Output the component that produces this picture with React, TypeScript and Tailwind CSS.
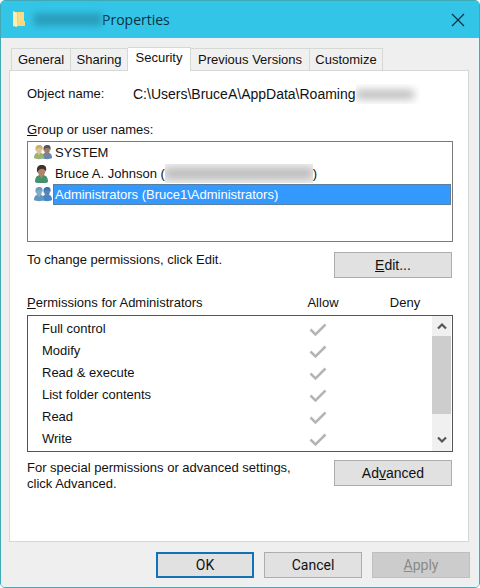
import React, { useState } from "react";
import clsx from "clsx";

const tabs = [
  { name: "General", width: "w-[60px]" },
  { name: "Sharing", width: "w-[57px]" },
  { name: "Security", width: "w-[63px]" },
  { name: "Previous Versions", width: "w-[119px]" },
  { name: "Customize", width: "w-[73px]" },
];

const permissions = [
  "Full control",
  "Modify",
  "Read & execute",
  "List folder contents",
  "Read",
  "Write",
];

const FolderIcon = () => (
  <svg width="13" height="17" viewBox="0 0 13 17" aria-hidden="true">
    <path d="M1 1h10v14H1z" fill="#f3cf66" />
    <path d="M5 1h6v9H5z" fill="#f9dd86" />
    <path d="M0 0l4 2v14l-4-1z" fill="#fdeeb4" />
    <path d="M4 10l8 0v5H4z" fill="#f6d982" />
  </svg>
);

interface PersonProps {
  x: number;
  y: number;
  hair: string;
  skin: string;
  shirt: string;
}

const Person: React.FC<PersonProps> = ({ x, y, hair, skin, shirt }) => (
  <g transform={`translate(${x} ${y})`}>
    <path d="M0 13c0-4 2-5.500 5-5.500s5 1.500 5 5.500c-2 1.500-8 1.500-10 0z" fill={shirt} />
    <path d="M3.200 7.200l1.800 3.300 1.800-3.300z" fill={skin} />
    <ellipse cx="5" cy="4.800" rx="2.900" ry="3.600" fill={skin} />
    <path d="M1.800 6C0.800 2 2.200 0 5.200 0s4 2 3.200 5C7.500 3.500 6.500 2.700 4.800 3 3.300 3 2.600 4 1.800 6z" fill={hair} />
  </g>
);

const SystemIcon = () => (
  <svg width="18" height="15" viewBox="0 0 18 15" aria-hidden="true">
    <Person x={8} y={0} hair="#55565c" skin="#a37b62" shirt="#6a86b0" />
    <Person x={0} y={0} hair="#c9b163" skin="#dcc394" shirt="#9ab373" />
  </svg>
);

const UserIcon = () => (
  <svg width="18" height="18" viewBox="0 0 18 18" aria-hidden="true">
    <g transform="translate(1 0) scale(1.300)">
      <Person x={0} y={0} hair="#3b332f" skin="#b08468" shirt="#45916b" />
    </g>
  </svg>
);

const AdminsIcon = () => (
  <svg width="18" height="15" viewBox="0 0 18 15" aria-hidden="true">
    <Person x={8} y={0} hair="#3f74b0" skin="#5785b5" shirt="#4486cb" />
    <Person x={0} y={0} hair="#6b9cbc" skin="#80acc6" shirt="#6197bd" />
  </svg>
);

const CheckMark = () => (
  <svg width="18" height="14" viewBox="0 0 18 14" role="img" aria-label="Allowed">
    <path d="M1.500 6.500L6.500 11.500L16.500 1.500" fill="none" stroke="#b5b5b5" strokeWidth="2.500" />
  </svg>
);

const Chevron = ({ down = false }: { down?: boolean }) => (
  <svg width="10" height="8" viewBox="0 0 10 8" aria-hidden="true">
    <path
      d={down ? "M1 1.500L5 5.500L9 1.500" : "M1 6.500L5 2.500L9 6.500"}
      fill="none"
      stroke="#555"
      strokeWidth="2.200"
    />
  </svg>
);

const users = [
  { id: "system", icon: <SystemIcon />, label: "SYSTEM" },
  {
    id: "bruce",
    icon: <UserIcon />,
    label: (
      <>
        Bruce A. Johnson (
        {/* hidden account address */}
        <span className="h-[19px] w-[148px] overflow-hidden bg-[#f0f0f0]" aria-hidden="true">
          <span className="mt-1 block h-[11px] bg-[#b8b8b8] blur-[4px]" />
        </span>
        )
      </>
    ),
  },
  { id: "admins", icon: <AdminsIcon />, label: "Administrators (Bruce1\\Administrators)" },
];

const buttonBase = "h-[26px] border text-[14px] leading-4";

const App: React.FC = () => {
  const [activeTab, setActiveTab] = useState("Security");
  const [selected, setSelected] = useState("admins");

  return (
    <div className="flex min-h-screen flex-col overflow-hidden rounded-[5px] border border-[#3fa9b5] bg-[#efefef] font-['Liberation_Sans',Arial,sans-serif] text-[13px] leading-4 text-[#111]">
      <header className="flex h-[37px] shrink-0 items-center bg-[#33c5e8] pr-[14px] pl-3 font-['Open_Sans','Noto_Sans',sans-serif] text-[14px] text-[#0b3143]">
        <FolderIcon />
        <span className="ml-2 h-[13px] w-[68px] bg-[#2a9fbc] blur-[3px]" aria-hidden="true" />
        <h1 className="flex-1">Properties</h1>
        <button type="button" aria-label="Close">
          <svg width="14" height="14" viewBox="0 0 14 14">
            <path d="M1 1l12 12M13 1L1 13" stroke="#0b3143" strokeWidth="1.200" />
          </svg>
        </button>
      </header>

      <main className="flex flex-1 flex-col border-x border-b border-[#dff8fc] pt-2 pr-2 pb-2 pl-[7px]">
        <div role="tablist" className="flex h-6 items-end pl-[2px]">
          {tabs.map((tab) => (
            <button
              key={tab.name}
              type="button"
              role="tab"
              aria-selected={tab.name === activeTab}
              onClick={() => setActiveTab(tab.name)}
              className={clsx(
                "border-t border-r border-[#d5d9d5] text-center whitespace-nowrap first:border-l",
                tab.width,
                tab.name === activeTab ? "z-10 -mb-px h-6 bg-white pb-1" : "h-[22px] bg-[#f0f0f0]"
              )}
            >
              {tab.name}
            </button>
          ))}
        </div>

        <section
          role="tabpanel"
          aria-label={activeTab}
          className="mr-px flex-1 border border-[#d5d9d5] bg-white pr-[15px] pl-[17px]"
        >
          <dl className="mt-[13px] flex h-5 items-center">
            <dt className="w-[106px]">Object name:</dt>
            <dd className="flex items-center text-[14px]">
              C:\Users\BruceA\AppData\Roaming
              <span className="h-5 w-16 overflow-hidden" aria-hidden="true">
                <span className="mt-[6px] mr-[6px] block h-[9px] bg-[#b8b8b8] blur-[4px]" />
              </span>
            </dd>
          </dl>

          <h2 id="names-label" className="mt-[18px]">
            <u>G</u>roup or user names:
          </h2>
          <ul
            role="listbox"
            aria-labelledby="names-label"
            className="mt-[3px] h-[101px] border border-[#7b7b7b] pr-px pl-[6px]"
          >
            {users.map((user) => (
              <li
                key={user.id}
                role="option"
                aria-selected={user.id === selected}
                onClick={() => setSelected(user.id)}
                className="flex h-[21px] items-center"
              >
                <span className="w-[19px] shrink-0">{user.icon}</span>
                <span
                  className={clsx(
                    "flex h-[21px] flex-1 items-center border pl-px",
                    user.id === selected
                      ? "border-[#5b7f9f] bg-[#3399ff] text-white"
                      : "border-transparent"
                  )}
                >
                  {user.label}
                </span>
              </li>
            ))}
          </ul>

          <div className="mt-[10px] flex justify-between pr-px">
            <p>To change permissions, click Edit.</p>
            <button type="button" className={clsx(buttonBase, "w-[118px] border-[#adadad] bg-[#e1e1e1]")}>
              <u>E</u>dit...
            </button>
          </div>

          <div className="mt-[17px] flex">
            <h2 id="permissions-label" className="flex-1">
              <u>P</u>ermissions for Administrators
            </h2>
            <span id="allow" className="w-[82px] text-center">Allow</span>
            <span id="deny" className="w-[82px] text-center">Deny</span>
            <span className="w-[7px]" />
          </div>
          <div className="mt-1 flex h-[137px] border border-[#555]">
            <table aria-labelledby="permissions-label" className="mt-[2px] h-[132px] flex-1">
              <tbody>
                {permissions.map((permission) => (
                  <tr key={permission} className="h-[22px]">
                    <th scope="row" className="pl-[14px] text-left font-normal">
                      {permission}
                    </th>
                    <td headers="allow" className="w-[35px] pt-[2px]">
                      <CheckMark />
                    </td>
                    <td headers="deny" className="w-[88px]" />
                  </tr>
                ))}
              </tbody>
            </table>
            <div className="mr-px flex w-[19px] flex-col bg-[#f0f0f0]">
              <button type="button" aria-label="Scroll up" className="flex h-5 items-center justify-center">
                <Chevron />
              </button>
              <div className="h-[78px] bg-[#cdcdcd]" />
              <button type="button" aria-label="Scroll down" className="mt-auto flex h-[22px] items-center justify-center">
                <Chevron down />
              </button>
            </div>
          </div>

          <div className="mt-2 flex justify-between pr-px">
            <p className="w-[290px]">For special permissions or advanced settings, click Advanced.</p>
            <button type="button" className={clsx(buttonBase, "w-[118px] border-[#adadad] bg-[#e1e1e1]")}>
              Ad<u>v</u>anced
            </button>
          </div>
        </section>

        <footer className="mt-[10px] flex justify-end gap-[10px] font-['Roboto',sans-serif]">
          <button type="button" className={clsx(buttonBase, "w-[98px] border-2 border-[#1272b8] bg-[#e1e1e1]")}>
            OK
          </button>
          <button type="button" className={clsx(buttonBase, "w-[98px] border-[#adadad] bg-[#e1e1e1]")}>
            Cancel
          </button>
          <button
            type="button"
            disabled
            className={clsx(buttonBase, "w-[98px] border-[#bfbfbf] bg-[#cccccc] text-[#8a8a8a]")}
          >
            <u>A</u>pply
          </button>
        </footer>
      </main>
    </div>
  );
};

export default App;
